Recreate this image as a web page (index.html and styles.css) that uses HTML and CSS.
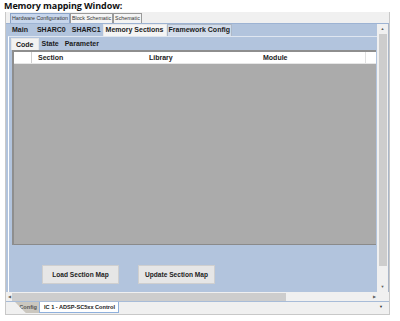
FILE: index.html
```html
<!DOCTYPE html>
<html>
<head>
<meta charset="utf-8">
<link rel="stylesheet" href="styles.css">
</head>
<body>
<div class="title">Memory mapping Window:</div>
<div class="window">
  <div class="toptabs">
    <div class="ttab sel">Hardware Configuration</div>
    <div class="ttab">Block Schematic</div>
    <div class="ttab">Schematic</div>
  </div>
  <div class="mid">
    <div class="content">
      <div class="tabs2">
        <div class="t2 first">Main</div>
        <div class="t2">SHARC0</div>
        <div class="t2">SHARC1</div>
        <div class="t2 sel">Memory Sections</div>
        <div class="t2 alt">Framework Config</div>
      </div>
      <div class="page">
        <div class="tabs3">
          <div class="t3 sel">Code</div>
          <div class="t3">State</div>
          <div class="t3">Parameter</div>
        </div>
        <div class="grid">
          <div class="ghead">
            <div class="gc c0"></div>
            <div class="gc c1">Section</div>
            <div class="gc c2">Library</div>
            <div class="gc c3">Module</div>
          </div>
          <div class="gbody"></div>
        </div>
        <div class="btnarea">
          <div class="btn">Load Section Map</div>
          <div class="btn">Update Section Map</div>
        </div>
      </div>
    </div>
    <div class="vscroll">
      <div class="arrow up">&#9650;</div>
      <div class="vthumb"></div>
      <div class="vtrack"></div>
      <div class="arrow dn">&#9660;</div>
    </div>
  </div>
  <div class="hscroll">
    <div class="harrow">&#9664;</div>
    <div class="hthumb"></div>
    <div class="htrack"></div>
    <div class="harrow">&#9654;</div>
    <div class="corner"></div>
  </div>
  <div class="bottomtabs">
    <div class="btab cfg">Config</div>
    <div class="btab cur">IC 1 - ADSP-SC5xx Control</div>
    <div class="bfill"></div>
    <div class="drop">&#9660;</div>
  </div>
</div>
</body>
</html>
```

FILE: styles.css
```css
* { box-sizing: border-box; }
html, body { margin: 0; padding: 0; background: #ffffff; }
body { width: 400px; height: 321px; overflow: hidden; font-family: "Liberation Sans", Arial, sans-serif; color: #1a1a1a; }
.title { height: 12px; padding-left: 4px; font-family: "Open Sans", sans-serif; font-weight: 700; font-size: 9px; line-height: 11px; letter-spacing: -0.1px; color: #111; }
.window { margin-left: 5px; width: 385px; height: 303px; background: #f0f0f0; border-left: 1px solid #c8c8c8; border-right: 1px solid #c8c8c8; border-bottom: 1px solid #c8c8c8; display: flex; flex-direction: column; }
.toptabs { height: 12px; display: flex; padding: 1px 0 0 4px; border-bottom: 1px solid #9db3d3; }
.ttab { font-size: 5.3px; line-height: 9px; height: 10px; padding: 0 1px; border: 1px solid #9a9a9a; border-bottom: none; background: #f4f4f4; color: #333; white-space: nowrap; }
.ttab.sel { background: #c7d6ec; border-color: #8ba4c9; }
.mid { display: flex; height: 268px; }
.content { width: 371px; background: #b2c4dd; padding-left: 2px; display: flex; flex-direction: column; }
.tabs2 { height: 12px; display: flex; align-items: stretch; }
.t2 { font-size: 7px; font-weight: 700; line-height: 12px; padding: 0 3px; white-space: nowrap; color: #1b1b1b; }
.t2.first { padding: 0 6px 0 4px; }
.t2.sel { margin-left: -1px; background: #f4f4f4; border: 1px solid #e8e8e8; border-bottom: none; line-height: 10px; padding: 0 2px; }
.t2.alt { background: #d2dcea; border: 1px solid #aeb9c8; border-bottom: none; line-height: 10px; padding: 0 1px; }
.page { flex: 1; border-left: 1px solid #ffffff; border-top: 1px solid #dfe6f0; display: flex; flex-direction: column; padding-left: 3px; }
.tabs3 { height: 13px; display: flex; padding-top: 1px; margin-left: -4px; padding-left: 3px; }
.t3 { font-size: 7px; font-weight: 700; line-height: 12px; padding: 0 3px; color: #1b1b1b; }
.t3.sel { background: #f2f2f2; border: 1px solid #e6e6e6; border-bottom: none; line-height: 11px; padding: 0 4px; }
.grid { display: flex; flex-direction: column; width: 364px; height: 195px; border-left: 2px solid #8e8e8e; border-top: 2px solid #8e8e8e; }
.ghead { height: 12px; background: #ffffff; display: flex; border-bottom: 1px solid #e6e6e6; }
.gc { font-size: 7px; font-weight: 700; line-height: 11px; color: #222; }
.c0 { width: 18px; border-right: 1px solid #cfcfcf; }
.c1 { width: 115px; padding-left: 6px; }
.c2 { width: 114px; padding-left: 2px; }
.c3 { flex: 1; padding-left: 2px; border-right: 1px solid #e0e0e0; margin-right: 10px; }
.gbody { flex: 1; background: #ababab; border-bottom: 1px solid #8a8a8a; }
.btnarea { flex: 1; display: flex; align-items: flex-start; padding: 20px 0 0 30px; gap: 19px; }
.btn { width: 77px; height: 19px; background: #e6e6e6; border: 1px solid #cfcfcf; font-size: 6.6px; font-weight: 700; line-height: 17px; text-align: center; color: #222; }
.vscroll { width: 12px; background: #f0f0f0; display: flex; flex-direction: column; align-items: center; border-right: 1px solid #aab6c8; }
.arrow { font-size: 4px; height: 10px; line-height: 10px; color: #606060; }
.vthumb { width: 8px; height: 232px; background: #cdcdcd; }
.vtrack { flex: 1; }
.hscroll { height: 10px; display: flex; align-items: center; background: #f0f0f0; border-bottom: 1px solid #a8bcd8; }
.harrow { width: 6px; font-size: 4px; color: #606060; text-align: center; padding-left: 1px; }
.hthumb { width: 274px; height: 8px; background: #cdcdcd; }
.htrack { flex: 1; }
.corner { width: 12px; }
.bottomtabs { flex: 1; display: flex; align-items: stretch; padding-left: 9px; }
.btab { font-size: 5.6px; font-weight: 700; line-height: 10px; height: 11px; white-space: nowrap; }
.btab.cfg { width: 24px; background: #cbc7bf; color: #555; text-align: right; padding-right: 2px; clip-path: polygon(0 0, 100% 0, 100% 100%, 45% 100%); }
.btab.cur { width: 80px; background: #ffffff; border: 1px solid #8fb0dc; border-top: none; padding-left: 4px; color: #222; }
.bfill { flex: 1; }
.drop { font-size: 4px; line-height: 10px; width: 10px; color: #333; }
```
